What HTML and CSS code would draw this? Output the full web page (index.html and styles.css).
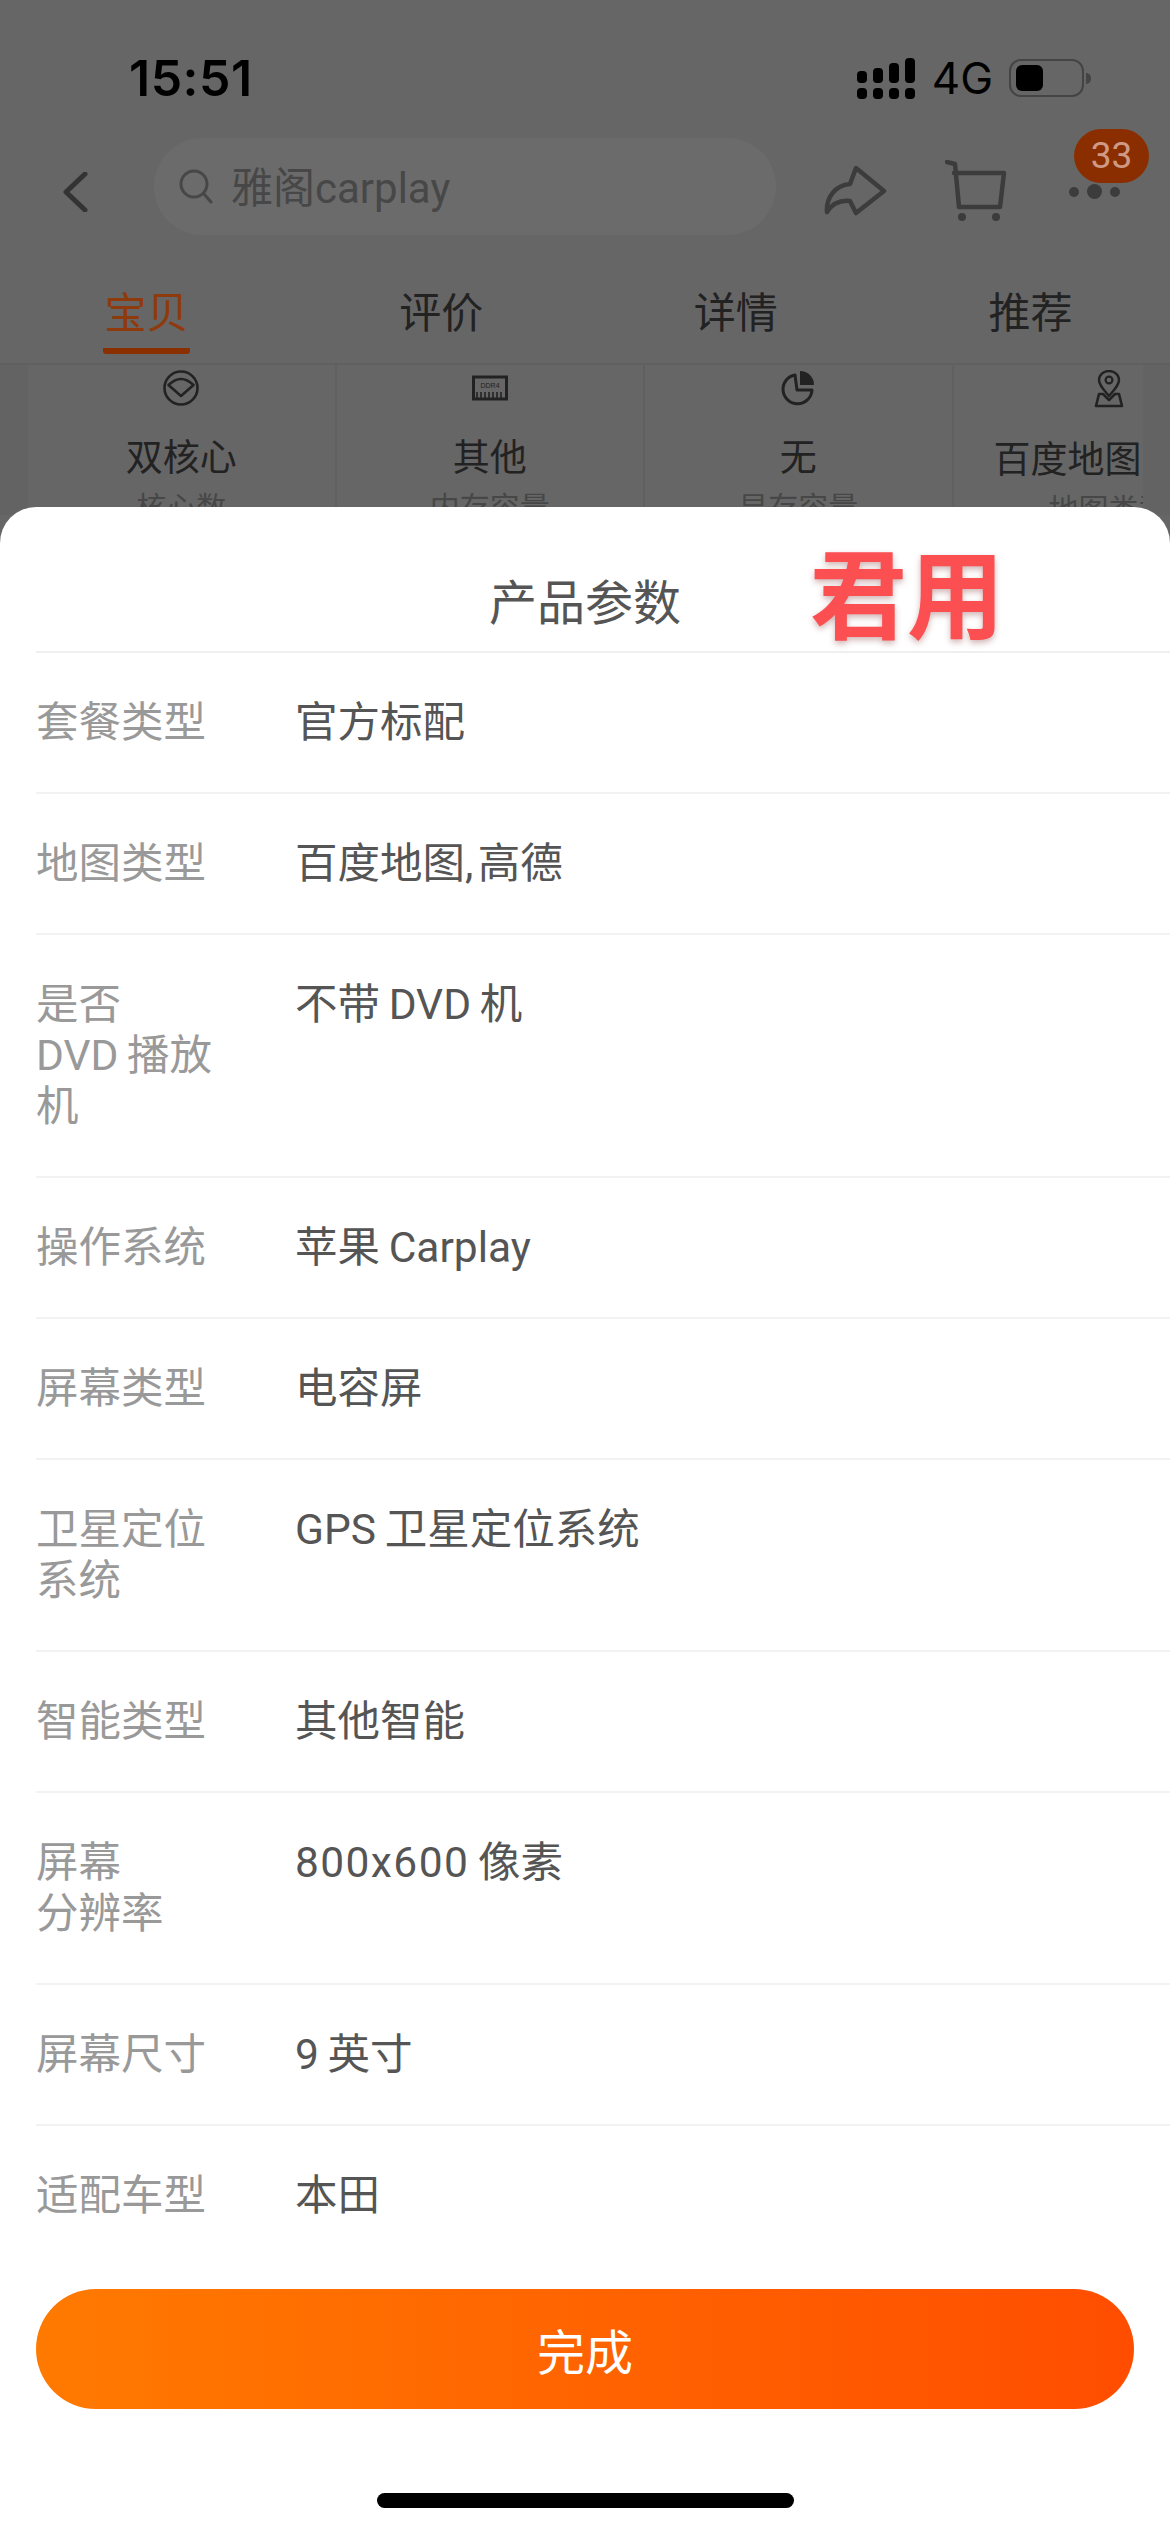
FILE: index.html
```html
<!DOCTYPE html>
<html lang="zh-CN">
<head>
    <meta charset="UTF-8">
    <meta name="viewport" content="width=device-width, initial-scale=1.0">
    <title>产品参数</title>
    <link rel="stylesheet" href="styles.css">
</head>
<body>
    <div class="page">
        <div class="status-bar">
            <span class="time">15:51</span>
            <div class="status-right">
                <svg class="signal" width="58" height="41" viewBox="0 0 58 41">
                    <rect x="0" y="13" width="10" height="12" rx="4" />
                    <rect x="16" y="10" width="10" height="15" rx="4" />
                    <rect x="32" y="5" width="10" height="20" rx="4" />
                    <rect x="48" y="0" width="10" height="25" rx="4" />
                    <rect x="0" y="30" width="10" height="11" rx="4" />
                    <rect x="16" y="30" width="10" height="11" rx="4" />
                    <rect x="32" y="30" width="10" height="11" rx="4" />
                    <rect x="48" y="30" width="10" height="11" rx="4" />
                </svg>
                <span class="network">4G</span>
                <div class="battery"><div class="battery-level"></div></div>
                <div class="battery-nub"></div>
            </div>
        </div>

        <div class="nav-bar">
            <svg class="back" width="25" height="40" viewBox="0 0 25 40">
                <path d="M22 2 L3 20 L22 38" fill="none" stroke="#333" stroke-width="5" stroke-linecap="round" stroke-linejoin="round" />
            </svg>
            <div class="search">
                <svg width="36" height="36" viewBox="0 0 36 36">
                    <circle cx="16" cy="15" r="13" fill="none" stroke="#474747" stroke-width="3" />
                    <path d="M26 25 L33 33" stroke="#474747" stroke-width="3" stroke-linecap="round" />
                </svg>
                <span class="search-text">雅阁carplay</span>
            </div>
            <svg class="share" width="64" height="54" viewBox="0 0 64 54">
                <path d="M33 3 L61 26 L33 48 L27 36 C17 35 9 39 4 47 C3 33 12 20 27 19 Z" fill="none" stroke="#3c3c3c" stroke-width="4.5" stroke-linejoin="round" />
            </svg>
            <svg class="cart" width="62" height="62" viewBox="0 0 62 62">
                <path d="M2 2 L10 4 L14 47 L55 47 L59 13 L9 13" fill="none" stroke="#3c3c3c" stroke-width="4.5" stroke-linecap="round" stroke-linejoin="round" />
                <circle cx="17" cy="57" r="4" fill="#3c3c3c" />
                <circle cx="51" cy="57" r="4" fill="#3c3c3c" />
            </svg>
            <div class="more">
                <i class="dot"></i>
                <i class="dot dot-big"></i>
                <i class="dot"></i>
            </div>
            <span class="badge">33</span>
        </div>

        <div class="tabs">
            <div class="tab active">宝贝</div>
            <div class="tab">评价</div>
            <div class="tab">详情</div>
            <div class="tab">推荐</div>
        </div>

        <div class="params-strip">
            <div class="param">
                <svg width="36" height="36" viewBox="0 0 36 36">
                    <circle cx="18" cy="18" r="16.5" fill="none" stroke="#222" stroke-width="2.6" />
                    <path d="M5.5 15 Q18 3 30.5 15 L18 26 Z" fill="none" stroke="#222" stroke-width="2.6" stroke-linejoin="round" />
                </svg>
                <div class="param-value">双核心</div>
                <div class="param-name">核心数</div>
            </div>
            <div class="param">
                <svg width="36" height="36" viewBox="0 0 36 36">
                    <rect x="1.5" y="7" width="33" height="22" fill="none" stroke="#222" stroke-width="3" />
                    <text x="18" y="18" font-size="7" text-anchor="middle" fill="#222" font-family="Liberation Sans, sans-serif">DDR4</text>
                    <path d="M5 28 V22 M9 28 V22 M13 28 V22 M17 28 V22 M21 28 V22 M25 28 V22 M29 28 V22" stroke="#222" stroke-width="1.6" />
                </svg>
                <div class="param-value">其他</div>
                <div class="param-name">内存容量</div>
            </div>
            <div class="param">
                <svg width="36" height="36" viewBox="0 0 36 36">
                    <path d="M15 5 A14.5 14.5 0 1 0 32 20 L17 20 L15 5 Z" fill="none" stroke="#222" stroke-width="3" stroke-linejoin="round" />
                    <path d="M20 1 A14 14 0 0 1 34 15 L20 15 Z" fill="#222" />
                </svg>
                <div class="param-value">无</div>
                <div class="param-name">显存容量</div>
            </div>
            <div class="param param-last">
                <svg width="36" height="38" viewBox="0 0 36 38">
                    <path d="M18 26 C12 19 8 15 8 10 A10 9 0 0 1 28 10 C28 15 24 19 18 26 Z" fill="none" stroke="#222" stroke-width="2.4" stroke-linejoin="round" />
                    <circle cx="18" cy="10" r="3.4" fill="none" stroke="#222" stroke-width="2.2" />
                    <path d="M8 24 L5 36 L31 36 L28 24 L24 24 L18 30 L12 24 Z" fill="none" stroke="#222" stroke-width="2.6" stroke-linejoin="round" />
                </svg>
                <div class="param-value">百度地图</div>
                <div class="param-name">地图类型</div>
            </div>
        </div>

        <div class="sheet">
            <div class="sheet-title">产品参数</div>
            <div class="stamp">君用</div>
            <div class="rows">
                <div class="row"><div class="row-label">套餐类型</div><div class="row-value">官方标配</div></div>
                <div class="row"><div class="row-label">地图类型</div><div class="row-value">百度地图,&#8202;高德</div></div>
                <div class="row"><div class="row-label">是否<br>DVD&#8201;播放<br>机</div><div class="row-value">不带&#8201;DVD&#8201;机</div></div>
                <div class="row"><div class="row-label">操作系统</div><div class="row-value">苹果&#8201;Carplay</div></div>
                <div class="row"><div class="row-label">屏幕类型</div><div class="row-value">电容屏</div></div>
                <div class="row"><div class="row-label">卫星定位<br>系统</div><div class="row-value">GPS&#8201;卫星定位系统</div></div>
                <div class="row"><div class="row-label">智能类型</div><div class="row-value">其他智能</div></div>
                <div class="row"><div class="row-label">屏幕<br>分辨率</div><div class="row-value"><span class="digits">800x600</span>&#8201;像素</div></div>
                <div class="row"><div class="row-label">屏幕尺寸</div><div class="row-value">9&#8201;英寸</div></div>
                <div class="row"><div class="row-label">适配车型</div><div class="row-value">本田</div></div>
            </div>
            <button class="done">完成</button>
            <div class="home-bar"></div>
        </div>
    </div>
</body>
</html>
```

FILE: styles.css
```css
* {
    box-sizing: border-box;
}
body {
    margin: 0;
    background: #666;
    font-family: Roboto, "Noto Sans CJK SC", sans-serif;
}
.page {
    position: relative;
    width: 1170px;
    height: 2532px;
    overflow: hidden;
    background: #666;
}

/* status bar */
.status-bar {
    display: flex;
    justify-content: space-between;
    align-items: center;
    height: 138px;
    padding: 18px 79px 0 129px;
    font-family: Inter, sans-serif;
}
.time {
    font-size: 50px;
    font-weight: 600;
    color: #000;
    letter-spacing: 0.5px;
}
.status-right {
    display: flex;
    align-items: center;
}
.signal {
    fill: #000;
    margin-right: 17px;
}
.network {
    font-size: 44px;
    color: #000;
    margin-right: 16px;
}
.battery {
    width: 75px;
    height: 38px;
    padding: 4px 5px;
    border: 2px solid #444;
    border-radius: 12px;
}
.battery-level {
    width: 27px;
    height: 26px;
    background: #000;
    border-radius: 6px;
}
.battery-nub {
    width: 5px;
    height: 11px;
    margin-left: 2px;
    background: #444;
    border-radius: 0 5px 5px 0;
}

/* nav */
.nav-bar {
    position: relative;
    display: flex;
    align-items: center;
    height: 97px;
    padding-left: 63px;
}
.back {
    margin-top: 10px;
}
.search {
    display: flex;
    align-items: center;
    gap: 17px;
    width: 622px;
    height: 97px;
    margin-left: 66px;
    padding-left: 24px;
    background: #6b6b6b;
    border-radius: 48px;
    font-size: 42px;
    color: #474747;
}
.search-text {
    margin-bottom: 4px;
}
.share {
    margin-left: 47px;
    margin-top: 11px;
}
.cart {
    margin-left: 58px;
    margin-top: 8px;
}
.more {
    display: flex;
    align-items: center;
    gap: 8px;
    margin-left: 62px;
    margin-top: 10px;
}
.dot {
    width: 10px;
    height: 10px;
    background: #3c3c3c;
    border-radius: 50%;
}
.dot-big {
    width: 15px;
    height: 15px;
}
.badge {
    position: absolute;
    top: -9px;
    left: 1074px;
    width: 75px;
    height: 54px;
    line-height: 54px;
    text-align: center;
    background: #8a2e00;
    border-radius: 27px;
    font-size: 37px;
    color: #cf9a85;
}

/* tabs */
.tabs {
    display: flex;
    justify-content: space-between;
    height: 130px;
    padding: 51px 96px 0 103px;
    border-bottom: 2px solid #606060;
}
.tab {
    width: 87px;
    height: 68px;
    font-size: 42px;
    line-height: 56px;
    text-align: center;
    color: #222;
}
.tab.active {
    color: #8f3a0d;
    border-bottom: 6px solid #8a3000;
    border-radius: 3px;
}

/* spec strip behind the sheet */
.params-strip {
    display: grid;
    grid-template-columns: repeat(4, 308.5px);
    height: 150px;
    padding-left: 28px;
    background: #636363;
    overflow: hidden;
}
.param {
    position: relative;
    padding-top: 5px;
    text-align: center;
    background: #666;
    border-right: 2px solid #606060;
}
.param:last-child {
    width: 189px;
    border-right: none;
    overflow: hidden;
}
.param svg {
    display: block;
    margin: 0 auto;
}
.param-last svg {
    margin-left: 137px;
}
.param-value {
    margin-top: 28px;
    font-size: 37px;
    line-height: 50px;
    color: #222;
}
.param-name {
    margin-top: 4px;
    font-size: 30px;
    line-height: 40px;
    color: #474747;
    white-space: nowrap;
}
.param-last .param-value {
    margin-left: 40px;
    text-align: left;
    white-space: nowrap;
}
.param-last .param-name {
    margin-left: 95px;
    text-align: left;
}

/* bottom sheet */
.sheet {
    position: absolute;
    top: 507px;
    left: 0;
    right: 0;
    bottom: 0;
    background: #fff;
    border-radius: 36px 36px 0 0;
}
.sheet-title {
    height: 146px;
    margin-left: 36px;
    padding: 65px 36px 0 0;
    border-bottom: 2px solid #efefef;
    font-size: 48px;
    line-height: 64px;
    text-align: center;
    color: #555;
}
.stamp {
    position: absolute;
    top: 27px;
    left: 810px;
    font-size: 97px;
    line-height: 110px;
    font-weight: 700;
    font-family: "Noto Sans CJK SC", sans-serif;
    color: #fb4f52;
    text-shadow: 0 3px 6px rgba(120, 40, 40, 0.35);
}
.row {
    display: flex;
    margin-left: 36px;
    padding: 44px 0;
    border-bottom: 2px solid #f2f2f2;
    font-size: 42.5px;
    line-height: 51px;
}
.row:last-child {
    border-bottom: none;
}
.row-label {
    width: 259px;
    color: #999;
}
.row-value {
    color: #555;
}
.digits {
    letter-spacing: 1.4px;
}
.done {
    display: block;
    width: 1098px;
    height: 120px;
    margin: 24px 0 0 36px;
    border: none;
    border-radius: 60px;
    background: linear-gradient(90deg, #ff7a00, #ff4d00);
    font-family: inherit;
    font-size: 48px;
    color: #fff;
}
.home-bar {
    width: 417px;
    height: 15px;
    margin: 84px auto 0;
    background: #000;
    border-radius: 8px;
}
```
